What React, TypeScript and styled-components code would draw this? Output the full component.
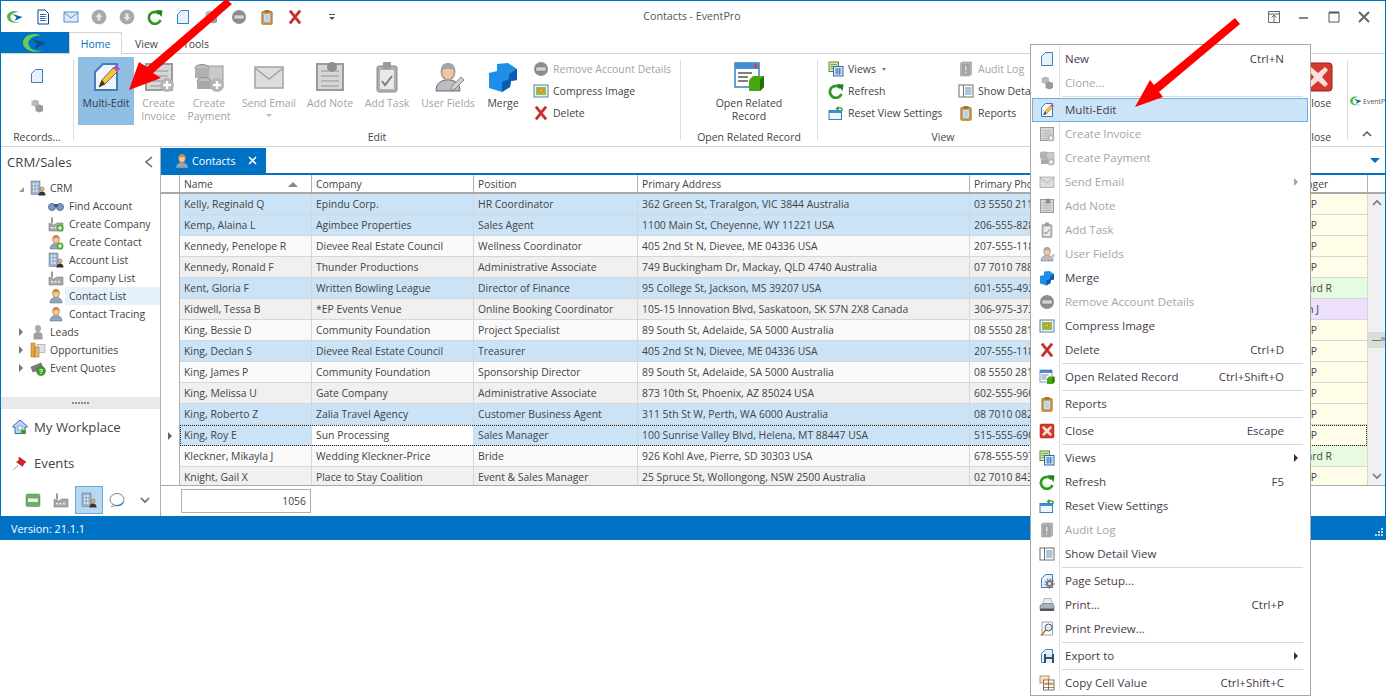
import React from "react";
import styled, { createGlobalStyle } from "styled-components";

const Global = createGlobalStyle`
  html, body { margin: 0; padding: 0; background: #fff; overflow: hidden; }
  body { font-family: "Open Sans", "Liberation Sans", sans-serif; font-size: 10.5px; color: #444; }
  * { box-sizing: border-box; }
`;

const BLUE = "#0072C6";
const GRAY = "#A3A3A3";

const Page = ({ f = "#E6F1FB", s = "#3B7DBE" }: { f?: string; s?: string }) => (
  <path d="M13 3h14v26H5V11z" fill={f} stroke={s} strokeWidth="2" />
);
const Plus = ({ c = "#B5B5B5" }: { c?: string }) => (
  <g>
    <circle cx="24" cy="24" r="7" fill={c} />
    <path d="M24 20v8M20 24h8" stroke="#fff" strokeWidth="2.4" />
  </g>
);
const Person = ({ h = "#C98A4E", b = "#8FA6BF" }: { h?: string; b?: string }) => (
  <g>
    <path d="M4 30c0-8 5-11 12-11s12 3 12 11z" fill={b} stroke="#5A6B80" />
    <ellipse cx="16" cy="11" rx="6.5" ry="8" fill="#F0C9A0" stroke={h} strokeWidth="2" />
    <path d="M9 10c0-6 3-8 7-8s7 2 7 8c-3-3-10-3-14 0z" fill={h} />
  </g>
);
const Building = () => (
  <g>
    <rect x="2" y="2" width="18" height="27" fill="#9DB2CC" stroke="#56708F" />
    <path d="M6 6h3v4H6zM12 6h3v4h-3zM6 13h3v4H6zM12 13h3v4h-3zM6 20h3v4H6zM12 20h3v4h-3z" fill="#E8EEF5" />
    <circle cx="24" cy="18" r="4" fill="#E9B77F" stroke="#7A4A1E" />
    <path d="M17 31c0-6 3-8 7-8s7 2 7 8z" fill="#333" />
  </g>
);
const Factory = () => (
  <g>
    <rect x="6" y="3" width="4" height="12" fill="#999" />
    <path d="M2 30V14l9 4 7-4 12 0v16z" fill="#A8A8A8" stroke="#6E6E6E" />
    <path d="M6 22h4v3H6zM13 22h4v3h-4zM20 22h4v3h-4z" fill="#EEE" />
  </g>
);
const Cubes = ({ a = "#9A9A9A", b = "#B9B9B9" }: { a?: string; b?: string }) => (
  <g>
    <path d="M5 6l8-3 7 3v9l-7 3-8-3z" fill={b} />
    <path d="M13 16l8-3 7 3v10l-7 3-8-3z" fill={a} />
  </g>
);
const Sheet = () => (
  <g>
    <rect x="3" y="3" width="26" height="26" fill="#D6D6D6" stroke="#9A9A9A" strokeWidth="2" />
    <path d="M7 10h18M7 15h18M7 20h18M7 25h18" stroke="#A9A9A9" strokeWidth="1.5" />
  </g>
);
const Clip = ({ f, s, c }: { f: string; s: string; c: string }) => (
  <g>
    <rect x="6" y="5" width="20" height="25" rx="2" fill={f} stroke={s} strokeWidth="2.5" />
    <rect x="11" y="2" width="10" height="6" rx="1" fill={s} />
    <rect x="10" y="10" width="12" height="16" fill="#fff" stroke={c} />
    <path d="M12 14h8M12 18h8M12 22h8" stroke={c} strokeWidth="1.5" />
  </g>
);

const icons: Record<string, React.ReactNode> = {
  logo: (
    <g>
      <path d="M24 6C11 0-1 8 0 16c1 10 15 15 28 9-11 3-20 0-21-9 0-5 8-11 17-10z" fill="#58B947" />
      <path d="M11 10l20 6-16 8 4-7z" fill="#0B63AE" />
    </g>
  ),
  logoLight: (
    <g>
      <path d="M24 6C11 0-1 8 0 16c1 10 15 15 28 9-11 3-20 0-21-9 0-5 8-11 17-10z" fill="#6CCB55" />
      <path d="M11 10l20 6-16 8 4-7z" fill="#0B4F92" />
    </g>
  ),
  doc: (
    <g>
      <path d="M6 2h14l7 7v21H6z" fill="#fff" stroke="#123E78" strokeWidth="2" />
      <path d="M10 11h13M10 15h13M10 19h13M10 23h13" stroke="#2D62B5" strokeWidth="2" strokeDasharray="10 1 2 1" />
    </g>
  ),
  mail: (
    <g>
      <rect x="2" y="6" width="28" height="20" fill="#DCEBFA" stroke="#5B8FC7" strokeWidth="2" />
      <path d="M2 7l14 11L30 7" fill="none" stroke="#5B8FC7" strokeWidth="2" />
    </g>
  ),
  up: (
    <g>
      <circle cx="16" cy="16" r="14" fill="#A9A9A9" stroke="#8A8A8A" />
      <path d="M16 8l7 8h-4v7h-6v-7H9z" fill="#E6E6E6" />
    </g>
  ),
  down: (
    <g>
      <circle cx="16" cy="16" r="14" fill="#A9A9A9" stroke="#8A8A8A" />
      <path d="M16 24l7-8h-4V9h-6v7H9z" fill="#E6E6E6" />
    </g>
  ),
  refresh: (
    <g>
      <path d="M25 10A12 12 0 1 0 27 22" fill="none" stroke="#2E9A1F" strokeWidth="5.5" />
      <path d="M18 2l13 1-2 13z" fill="#1F7F14" />
    </g>
  ),
  new: <Page />,
  clone: <Cubes />,
  remove: (
    <g>
      <circle cx="16" cy="16" r="14" fill="#8E8E8E" />
      <rect x="6" y="12" width="20" height="8" fill="#D4D4D4" stroke="#777" />
    </g>
  ),
  reports: <Clip f="#E2B255" s="#A9772A" c="#4B82C3" />,
  del: <path d="M4 5l4-3 8 10 8-10 4 3-9 11 9 11-4 3-8-10-8 10-4-3 9-11z" fill="#CE2A22" stroke="#8E1710" strokeWidth=".6" />,
  multiEdit: (
    <g>
      <Page f="#EFF6FD" s="#3F7EBB" />
      <path d="M9 26l3-7L24 6l4 4-13 13z" fill="#F4C542" stroke="#8A6A1A" />
      <path d="M9 26l3-7 3 4z" fill="#333" />
      <path d="M23 7l3-3 4 4-3 3z" fill="#B74BC6" />
    </g>
  ),
  invoice: (
    <g>
      <Sheet />
      <Plus />
    </g>
  ),
  payment: (
    <g>
      <rect x="12" y="5" width="18" height="17" fill="#C9C9C9" stroke="#9A9A9A" />
      <ellipse cx="9" cy="7" rx="7" ry="3.5" fill="#BDBDBD" stroke="#8E8E8E" />
      <rect x="2" y="7" width="14" height="10" fill="#B0B0B0" />
      <ellipse cx="11" cy="20" rx="7" ry="3.5" fill="#BDBDBD" stroke="#8E8E8E" />
      <rect x="4" y="20" width="14" height="8" fill="#A8A8A8" />
      <Plus />
    </g>
  ),
  mailGray: (
    <g>
      <rect x="2" y="6" width="28" height="21" fill="#DDD" stroke="#A2A2A2" strokeWidth="1.5" />
      <path d="M2 7l14 11L30 7" fill="none" stroke="#A2A2A2" strokeWidth="1.5" />
    </g>
  ),
  note: (
    <g>
      <Sheet />
      <circle cx="18" cy="6" r="5" fill="#8F8F8F" />
    </g>
  ),
  task: (
    <g>
      <rect x="6" y="5" width="20" height="26" rx="2" fill="#AFAFAF" stroke="#8A8A8A" />
      <rect x="12" y="1" width="8" height="7" rx="1" fill="#9A9A9A" />
      <rect x="9" y="9" width="14" height="19" fill="#E8E8E8" />
      <path d="M11 20l3 4 7-9" fill="none" stroke="#7E7E7E" strokeWidth="2" />
    </g>
  ),
  userFields: (
    <g>
      <Person h="#A4A4A4" b="#BDBDBD" />
      <path d="M18 30l2-5 9-9 3 3-9 9z" fill="#CFCFCF" stroke="#8A8A8A" />
    </g>
  ),
  merge: (
    <g>
      <path d="M10 3l11-1 9 6v11l-6 1-1 6-8 5-13-4V12l8-2z" fill="#1E8FE6" />
      <path d="M22 13l8-5v11l-6 1-1 6-8 5v-10l7-3z" fill="#0B5CAF" />
    </g>
  ),
  compress: (
    <g>
      <rect x="2" y="4" width="28" height="24" fill="#EAF1F9" stroke="#5C7FA8" strokeWidth="2" />
      <rect x="6" y="8" width="20" height="16" fill="#8FBF4D" />
      <circle cx="16" cy="15" r="5" fill="#E58A1F" />
      <circle cx="16" cy="15" r="2" fill="#F8D24B" />
    </g>
  ),
  openRelated: (
    <g>
      <rect x="2" y="2" width="24" height="24" fill="#fff" stroke="#3B7DBE" strokeWidth="1.5" />
      <rect x="2" y="2" width="24" height="6" fill="#3F8FD6" />
      <rect x="21" y="3.5" width="3" height="3" fill="#E33" />
      <path d="M5 12h14M5 16h10M5 20h10" stroke="#555" strokeWidth="1.4" />
      <path d="M16 19l4-4h11v11l-4 4H16z" fill="#46A80E" />
      <path d="M27 19l4-4v11l-4 4z" fill="#1F7005" />
    </g>
  ),
  views: (
    <g>
      <rect x="2" y="2" width="19" height="19" fill="#D2E5B8" stroke="#5E8F2A" strokeWidth="2" />
      <path d="M5 7h13M5 11h13M5 15h13" stroke="#5E8F2A" strokeWidth="1.5" />
      <rect x="11" y="11" width="19" height="19" fill="#DCE9F8" stroke="#2F6CA8" strokeWidth="2" />
      <path d="M14 16h13M14 20h13M14 24h13M18 14v14M23 14v14" stroke="#2F6CA8" strokeWidth="1.5" />
    </g>
  ),
  reset: (
    <g>
      <rect x="2" y="11" width="25" height="18" fill="#EEF5FC" stroke="#3B7DBE" strokeWidth="2" />
      <rect x="2" y="11" width="25" height="5" fill="#3F8FD6" />
      <path d="M18 8c4-4 11-3 11 3" fill="none" stroke="#2E9A1F" strokeWidth="2.5" />
      <path d="M21 2v10l-6-5z" fill="#2E9A1F" />
    </g>
  ),
  audit: (
    <g>
      <path d="M5 4l4-2h18v25l-4 3H5z" fill="#B4B4B4" stroke="#8C8C8C" />
      <rect x="8" y="6" width="15" height="21" fill="#A2A2A2" />
      <path d="M15.5 10v9" stroke="#E2E2E2" strokeWidth="3" />
      <circle cx="15.5" cy="23" r="1.7" fill="#E2E2E2" />
    </g>
  ),
  detail: (
    <g>
      <rect x="2" y="4" width="28" height="24" fill="#fff" stroke="#6E6E6E" strokeWidth="2" />
      <path d="M11 4v24" stroke="#6E6E6E" strokeWidth="2" />
      <path d="M14 10h13M14 14h13M14 18h13M14 22h13" stroke="#2F6CA8" strokeWidth="1.6" />
    </g>
  ),
  closeRed: (
    <g>
      <rect x="2" y="2" width="28" height="28" rx="3" fill="#D5392C" stroke="#9A1F14" />
      <path d="M9 6l7 6 7-6 3 3-6 7 6 7-3 3-7-6-7 6-3-3 6-7-6-7z" fill="#F8E0DC" />
    </g>
  ),
  pageSetup: (
    <g>
      <Page />
      <circle cx="21" cy="21" r="7" fill="#777" />
      <circle cx="21" cy="21" r="3" fill="#eee" />
      <circle cx="21" cy="21" r="9" fill="none" stroke="#777" strokeWidth="2.5" strokeDasharray="3 3" />
    </g>
  ),
  print: (
    <g>
      <path d="M10 3h14l3 12H7z" fill="#E6EDF5" stroke="#6F7F92" />
      <path d="M2 17l6-4h20l2 4v9H2z" fill="#A9B0B8" stroke="#555" />
      <rect x="2" y="23" width="28" height="5" fill="#555" />
    </g>
  ),
  preview: (
    <g>
      <path d="M6 2h21v26H6z" fill="#fff" stroke="#6E8FB5" strokeWidth="1.6" />
      <circle cx="19" cy="13" r="7" fill="#DCEBFA" stroke="#555" strokeWidth="2" />
      <path d="M14 18L4 29" stroke="#B5792C" strokeWidth="3.5" />
    </g>
  ),
  export: (
    <g>
      <Page f="#EAF3FB" />
      <rect x="10" y="12" width="20" height="18" fill="#2F4F72" />
      <rect x="14" y="12" width="12" height="6" fill="#DCE6F0" />
      <rect x="14" y="22" width="12" height="8" fill="#EEE" />
    </g>
  ),
  copy: (
    <g>
      <rect x="2" y="2" width="18" height="14" fill="#F8E2C8" stroke="#B5752C" strokeWidth="1.6" />
      <rect x="9" y="10" width="21" height="20" fill="#fff" stroke="#555" strokeWidth="1.6" />
      <path d="M9 15h21v5H9z" fill="#E39A4A" />
      <path d="M9 25h21M19 10v20" stroke="#555" strokeWidth="1.4" />
    </g>
  ),
  contact: <Person />,
  crm: <Building />,
  find: (
    <g>
      <circle cx="8" cy="18" r="7" fill="#7C9CC4" stroke="#3D5A80" strokeWidth="1.5" />
      <circle cx="24" cy="18" r="7" fill="#7C9CC4" stroke="#3D5A80" strokeWidth="1.5" />
      <rect x="12" y="12" width="8" height="6" fill="#3D5A80" />
    </g>
  ),
  createCompany: (
    <g>
      <Factory />
      <Plus c="#4FAF2E" />
    </g>
  ),
  createContact: (
    <g>
      <Person />
      <Plus c="#4FAF2E" />
    </g>
  ),
  company: <Factory />,
  leads: (
    <g>
      <ellipse cx="16" cy="9" rx="6" ry="7" fill="#A9A9A9" />
      <path d="M7 31V22c0-4 4-6 9-6s9 2 9 6v9z" fill="#A0A0A0" />
    </g>
  ),
  opps: (
    <g>
      <rect x="14" y="5" width="16" height="16" fill="#DDE3EA" stroke="#7A8CA0" />
      <rect x="2" y="2" width="8" height="28" fill="#E7A446" stroke="#9A651C" />
      <rect x="10" y="10" width="8" height="20" fill="#EDB55F" stroke="#9A651C" />
    </g>
  ),
  quotes: (
    <g>
      <path d="M2 14l20-8 4 10-20 8z" fill="#7E7E7E" stroke="#444" />
      <circle cx="22" cy="22" r="9" fill="#3F9F2A" stroke="#1F6A10" />
      <text x="22" y="27" textAnchor="middle" fontSize="13" fontWeight="700" fill="#fff" fontFamily="Liberation Sans, sans-serif">?</text>
    </g>
  ),
  home: (
    <g>
      <path d="M16 2L1 15l3 2 2-1v13h20V16l2 1 3-2z" fill="#BDD7F0" stroke="#2F6CA8" strokeWidth="2" />
      <rect x="12" y="14" width="8" height="8" fill="#fff" stroke="#2F6CA8" />
      <rect x="18" y="22" width="10" height="8" rx="2" fill="#3F9F2A" />
    </g>
  ),
  pin: (
    <g>
      <path d="M14 4l14 10-4 3-3 6-12-9 5-3z" fill="#D8232A" stroke="#9A1117" />
      <path d="M12 20L3 30" stroke="#999" strokeWidth="2" />
    </g>
  ),
  cal: (
    <g>
      <rect x="2" y="4" width="28" height="25" rx="3" fill="#6FAE6A" stroke="#4D8A4A" />
      <rect x="6" y="13" width="20" height="7" fill="#E8F5E6" />
    </g>
  ),
  chat: (
    <g>
      <ellipse cx="16" cy="15" rx="14" ry="12" fill="#fff" stroke="#5A5A5A" strokeWidth="1.5" />
      <path d="M28 20c-2 6-9 8-15 7" fill="none" stroke="#2F7FD0" strokeWidth="2.5" />
      <path d="M8 24l-3 6 8-3z" fill="#fff" stroke="#5A5A5A" />
    </g>
  ),
};

const IconBox = styled.svg<{ $s: number }>`
  width: ${(p) => p.$s}px;
  height: ${(p) => p.$s}px;
  flex: none;
  display: block;
`;
const Ic = ({ n, s = 16 }: { n: string; s?: number }) => (
  <IconBox $s={s} viewBox="0 0 32 32" aria-hidden="true">
    {icons[n]}
  </IconBox>
);

const Window = styled.div`
  width: 1386px;
  height: 540px;
  display: flex;
  flex-direction: column;
  border-top: 1px solid ${BLUE};
  position: relative;
`;
const Inner = styled.div`
  flex: 1;
  min-height: 0;
  display: flex;
  flex-direction: column;
  border-left: 1px solid ${BLUE};
  border-right: 1px solid ${BLUE};
`;
const TitleBar = styled.div`
  height: 31px;
  display: flex;
  align-items: center;
  position: relative;
  padding-left: 6px;
`;
const Qat = styled.div`
  display: flex;
  align-items: center;
  gap: 12px;
  padding-right: 8px;
`;
const QatMore = styled.span`
  margin-left: 14px;
  width: 6px;
  height: 6px;
  border-top: 1px solid #555;
  position: relative;
  &::after {
    content: "";
    position: absolute;
    left: 0;
    top: 2px;
    border-left: 3px solid transparent;
    border-right: 3px solid transparent;
    border-top: 3px solid #555;
  }
`;
const Title = styled.div`
  position: absolute;
  left: 0;
  right: 0;
  top: 8px;
  text-align: center;
  font-size: 10.7px;
  color: #555;
  padding-right: 2px;
`;
const WinButtons = styled.div`
  margin-left: auto;
  display: flex;
  align-items: center;
  gap: 14px;
  padding-right: 13px;
`;
const WinBtn = styled.svg`
  width: 16px;
  height: 16px;
  display: block;
`;
const TabsRow = styled.div`
  height: 21px;
  display: flex;
  align-items: stretch;
  margin-left: -1px;
`;
const FileTab = styled.div`
  width: 69px;
  background: ${BLUE};
  display: flex;
  align-items: center;
  justify-content: center;
`;
const RibbonTab = styled.div<{ $active?: boolean; $w: number }>`
  width: ${(p) => p.$w}px;
  display: flex;
  align-items: center;
  justify-content: center;
  padding-top: 1px;
  font-size: 10.5px;
  color: ${(p) => (p.$active ? BLUE : "#444")};
  background: #fff;
  border: 1px solid ${(p) => (p.$active ? "#D4D4D4" : "transparent")};
  border-bottom: none;
  position: relative;
  margin-bottom: ${(p) => (p.$active ? "-1px" : "0")};
  z-index: 1;
`;
const Ribbon = styled.div`
  height: 94px;
  display: flex;
  border-top: 1px solid #d4d4d4;
  border-bottom: 1px solid #d4d4d4;
`;
const Group = styled.div<{ $w?: number; $grow?: boolean }>`
  width: ${(p) => (p.$w ? p.$w + "px" : "auto")};
  flex: ${(p) => (p.$grow ? "1" : "none")};
  display: flex;
  flex-direction: column;
`;
const GroupBody = styled.div<{ $pad?: number; $center?: boolean }>`
  flex: 1;
  display: flex;
  padding: 3px 0 0 ${(p) => p.$pad ?? 0}px;
  justify-content: ${(p) => (p.$center ? "center" : "flex-start")};
  min-height: 0;
`;
const GroupLabel = styled.div`
  height: 14px;
  margin-bottom: 2px;
  line-height: 14px;
  text-align: center;
  font-size: 10.5px;
  color: #444;
  white-space: nowrap;
`;
const GroupSep = styled.div`
  width: 1px;
  flex: none;
  margin: 6px 0 6px;
  background: #dcdcdc;
`;
const RecordsCol = styled.div`
  width: 100%;
  display: flex;
  flex-direction: column;
  align-items: center;
  padding-top: 11px;
  gap: 14px;
`;
const LargeBtn = styled.div<{ $w: number; $on?: boolean; $off?: boolean }>`
  width: ${(p) => p.$w}px;
  height: 68px;
  flex: none;
  display: flex;
  flex-direction: column;
  align-items: center;
  padding-top: 4px;
  background: ${(p) => (p.$on ? "#90BEE2" : "transparent")};
  color: ${(p) => (p.$on ? "#2B3D52" : p.$off ? GRAY : "#444")};
`;
const LargeLabel = styled.div`
  margin-top: 4px;
  line-height: 13px;
  text-align: center;
  white-space: pre-line;
  font-size: 10.5px;
`;
const Caret = styled.span`
  display: block;
  margin: 4px auto 0;
  width: 0;
  height: 0;
  border-left: 3px solid transparent;
  border-right: 3px solid transparent;
  border-top: 3px solid #bbb;
`;
const SmallCol = styled.div<{ $w?: number; $ml?: number }>`
  width: ${(p) => (p.$w ? p.$w + "px" : "auto")};
  margin-left: ${(p) => p.$ml ?? 0}px;
  flex: none;
  display: flex;
  flex-direction: column;
  padding-top: 1px;
`;
const SmallBtn = styled.div<{ $off?: boolean }>`
  height: 22px;
  display: flex;
  align-items: center;
  gap: 4px;
  white-space: nowrap;
  font-size: 10.5px;
  color: ${(p) => (p.$off ? GRAY : "#444")};
`;
const SmallCaret = styled.span`
  width: 0;
  height: 0;
  margin-left: 2px;
  border-left: 2.5px solid transparent;
  border-right: 2.5px solid transparent;
  border-top: 3px solid #777;
`;
const LogoBox = styled.div`
  height: 74px;
  display: flex;
  align-items: center;
  padding: 20px 0 0 2px;
  gap: 1px;
  overflow: hidden;
  font-size: 7px;
  color: #555;
  white-space: nowrap;
`;
const Chevron = styled.svg`
  display: block;
  margin: 0 auto;
  width: 10px;
  height: 14px;
`;
const Body = styled.div`
  flex: 1;
  min-height: 0;
  display: flex;
`;
const Side = styled.div`
  width: 160px;
  flex: none;
  display: flex;
  flex-direction: column;
  border-right: 1px solid #b0b0b0;
`;
const SideHead = styled.div`
  height: 32px;
  display: flex;
  align-items: center;
  justify-content: space-between;
  padding: 0 6px 3px 6px;
  font-size: 13.2px;
  color: #444;
`;
const Tree = styled.div`
  flex: 1;
`;
const TreeRow = styled.div<{ $lvl?: number; $sel?: boolean }>`
  height: 18px;
  display: flex;
  align-items: center;
  padding-left: ${(p) => (p.$lvl ? 47 : 14)}px;
  gap: ${(p) => (p.$lvl ? 5 : 4)}px;
  color: #444;
  font-size: 10.5px;
  white-space: nowrap;
  position: relative;
  &::before {
    content: "";
    position: absolute;
    left: 64px;
    right: 0;
    top: 0;
    bottom: 0;
    background: ${(p) => (p.$sel ? "#E5F1FB" : "transparent")};
    z-index: 0;
  }
  & > * {
    position: relative;
    z-index: 1;
  }
`;
const Expander = styled.span<{ $open?: boolean }>`
  width: 12px;
  margin-right: -1px;
  flex: none;
  display: flex;
  justify-content: center;
  &::before {
    content: "";
    width: 0;
    height: 0;
    ${(p) =>
      p.$open
        ? "border-left: 5px solid transparent; border-bottom: 5px solid #999; margin-top: 2px;"
        : "border-top: 4px solid transparent; border-bottom: 4px solid transparent; border-left: 4px solid #777;"}
  }
`;
const Grip = styled.div`
  height: 12px;
  background: #e9e9e9;
  display: flex;
  align-items: center;
  justify-content: center;
  gap: 1px;
`;
const GripDot = styled.span`
  width: 2px;
  height: 2px;
  background: #8a8a8a;
`;
const NavItem = styled.div`
  height: 36px;
  display: flex;
  align-items: center;
  padding-left: 11px;
  gap: 6px;
  font-size: 13.2px;
  color: #444;
`;
const NavIcons = styled.div`
  height: 35px;
  display: flex;
  align-items: flex-start;
  padding: 5px 0 0 18px;
`;
const NavIcon = styled.div<{ $sel?: boolean }>`
  width: 28px;
  height: 28px;
  display: flex;
  align-items: center;
  justify-content: center;
  background: ${(p) => (p.$sel ? "#B6D8F2" : "transparent")};
  border: 1px solid ${(p) => (p.$sel ? "#6EA9DD" : "transparent")};
`;
const Main = styled.div`
  flex: 1;
  min-width: 0;
  display: flex;
  flex-direction: column;
`;
const DocStrip = styled.div`
  height: 28px;
  flex: none;
  display: flex;
  align-items: flex-end;
  justify-content: space-between;
  border-bottom: 2px solid ${BLUE};
`;
const DocTab = styled.div`
  width: 105px;
  height: 25px;
  background: ${BLUE};
  color: #fff;
  display: flex;
  align-items: center;
  padding-left: 13px;
  gap: 2px;
  font-size: 10.7px;
`;
const DocClose = styled.svg`
  width: 9px;
  height: 9px;
  margin-left: auto;
  margin-right: 9px;
`;
const DocMenu = styled.span`
  width: 0;
  height: 0;
  margin: 0 5px 10px 0;
  border-left: 5px solid transparent;
  border-right: 5px solid transparent;
  border-top: 5px solid ${BLUE};
`;
const GridRow = styled.div`
  display: grid;
  grid-template-columns: 19px 132px 162px 164px 332px 270px 128px 17px;
`;
const HeadRow = styled(GridRow)`
  height: 19px;
  flex: none;
  border-bottom: 2px solid #a8a8a8;
`;
const HeadCell = styled.div<{ $plain?: boolean }>`
  border-right: 1px solid ${(p) => (p.$plain ? "transparent" : "#b0b0b0")};
  padding: 1px 4px 0;
  line-height: 16px;
  font-size: 10.3px;
  color: #444;
  overflow: hidden;
  white-space: nowrap;
  display: flex;
  align-items: center;
  justify-content: space-between;
`;
const IndicatorHead = styled(HeadCell)`
  padding: 0;
`;
const SortUp = styled.span`
  width: 0;
  height: 0;
  margin-right: 9px;
  border-left: 5px solid transparent;
  border-right: 5px solid transparent;
  border-bottom: 5px solid #888;
`;
const GridBody = styled.div`
  flex: 1;
  min-height: 0;
  position: relative;
  overflow: hidden;
  border-bottom: 1px solid #a8a8a8;
`;
const DataRow = styled(GridRow)`
  height: 21px;
  position: relative;
`;
const Cell = styled.div<{ $bg: string }>`
  background: ${(p) => p.$bg};
  border-right: 1px solid #d6d6d6;
  border-bottom: 1px solid #d6d6d6;
  padding: 0 4px;
  line-height: 20px;
  font-size: 10.4px;
  color: #444;
  overflow: hidden;
  white-space: nowrap;
`;
const ManagerCell = styled(Cell)<{ $end: number }>`
  text-align: right;
  padding-right: ${(p) => p.$end}px;
`;
const Indicator = styled.div`
  background: #fff;
  border-right: 1px solid #b0b0b0;
  display: flex;
  align-items: center;
  justify-content: center;
  &::before {
    content: "";
    width: 0;
    height: 0;
    border-top: 4px solid transparent;
    border-bottom: 4px solid transparent;
    border-left: 4px solid #666;
  }
`;
const BlankIndicator = styled.div`
  background: #fff;
  border-right: 1px solid #b0b0b0;
`;
const FocusBox = styled.div`
  position: absolute;
  left: 19px;
  width: 1187px;
  top: 0;
  height: 21px;
  border: 1px dotted #222;
  pointer-events: none;
`;
const ScrollTrack = styled.div`
  position: absolute;
  right: 0;
  top: 0;
  bottom: 0;
  width: 17px;
  background: #f0f0f0;
  display: flex;
  flex-direction: column;
  align-items: center;
  justify-content: space-between;
  padding: 5px 0;
  color: #777;
`;
const ScrollThumb = styled.div`
  position: absolute;
  top: 138px;
  left: 0;
  right: -1px;
  height: 16px;
  background: #dcdcdc;
  display: flex;
  align-items: center;
  padding-left: 4px;
`;
const ThumbMark = styled.span`
  width: 9px;
  height: 1px;
  background: #3f9f2a;
`;
const ThumbNub = styled.span`
  width: 4px;
  height: 4px;
  margin-bottom: 3px;
  background: #a8a8a8;
`;
const ScrollChev = styled.svg`
  width: 10px;
  height: 8px;
  display: block;
`;
const Footer = styled.div`
  height: 30px;
  flex: none;
  padding: 3px 0 0 20px;
`;
const SumBox = styled.div`
  width: 130px;
  height: 24px;
  border: 1px solid #b0b0b0;
  text-align: right;
  padding-right: 4px;
  line-height: 22px;
  font-size: 10.4px;
  color: #444;
`;
const Status = styled.div`
  height: 24px;
  flex: none;
  margin: 0 -1px;
  background: ${BLUE};
  color: #fff;
  font-size: 10.8px;
  display: flex;
  align-items: center;
  justify-content: space-between;
  padding: 0 3px 0 12px;
`;
const Resize = styled.svg`
  width: 10px;
  height: 10px;
  align-self: flex-end;
  margin-bottom: 3px;
`;
const Menu = styled.div`
  position: absolute;
  left: 1030px;
  top: 44px;
  width: 281px;
  height: 652px;
  background: #fff;
  border: 2px solid #a6a6a6;
  border-width: 1px 1.5px 1.5px 1px;
  padding: 2px 1px 0;
  z-index: 5;
  display: flex;
  flex-direction: column;
`;
const MenuItem = styled.div<{ $off?: boolean; $hot?: boolean }>`
  height: 24px;
  flex: none;
  display: flex;
  align-items: center;
  position: relative;
  font-size: 11.5px;
  color: ${(p) => (p.$off ? "#A5A5A5" : "#4A3A4E")};
  background: ${(p) => (p.$hot ? "#CCE4F7" : "transparent")};
  border: 1px solid ${(p) => (p.$hot ? "#6FB0E4" : "transparent")};
  margin-right: 1px;
`;
const MenuGutter = styled.div`
  width: 27px;
  height: 24px;
  flex: none;
  display: flex;
  align-items: center;
  justify-content: center;
  margin-left: -1px;
  padding-left: 2px;
`;
const MenuLabel = styled.span`
  margin: 0 0 2px 6px;
  flex: 1;
  white-space: nowrap;
`;
const MenuKey = styled.span`
  margin: 0 23px 2px 0;
  white-space: nowrap;
`;
const MenuArrow = styled.span<{ $off?: boolean }>`
  position: absolute;
  right: 9px;
  width: 0;
  height: 0;
  border-top: 4px solid transparent;
  border-bottom: 4px solid transparent;
  border-left: 4px solid ${(p) => (p.$off ? "#A5A5A5" : "#333")};
`;
const MenuSep = styled.div`
  height: 3px;
  flex: none;
  margin-left: 30px;
  margin-right: 6px;
  display: flex;
  align-items: center;
  &::before {
    content: "";
    flex: 1;
    height: 1px;
    background: #d8d8d8;
  }
`;
const GutterLine = styled.div`
  position: absolute;
  left: 28px;
  top: 0;
  bottom: 4px;
  width: 1px;
  background: #e2e2e2;
`;
const Arrows = styled.svg`
  position: absolute;
  left: 0;
  top: 0;
  width: 1386px;
  height: 697px;
  z-index: 9;
  pointer-events: none;
`;

const Y = "#FFFCE8";
const G = "#E6FBDF";
const V = "#EDE0FD";
type R = [string, string, string, string, string, string, string, number, boolean];
const rows: R[] = [
  ["Kelly, Reginald Q", "Epindu Corp.", "HR Coordinator", "362 Green St, Traralgon, VIC 3844 Australia", "03 5550 2110", "Lewis, Anne P", Y, 50, true],
  ["Kemp, Alaina L", "Agimbee Properties", "Sales Agent", "1100 Main St, Cheyenne, WY 11221 USA", "206-555-8280", "Lewis, Anne P", Y, 50, true],
  ["Kennedy, Penelope R", "Dievee Real Estate Council", "Wellness Coordinator", "405 2nd St N, Dievee, ME 04336 USA", "207-555-1180", "Lewis, Anne P", Y, 50, false],
  ["Kennedy, Ronald F", "Thunder Productions", "Administrative Associate", "749 Buckingham Dr, Mackay, QLD 4740 Australia", "07 7010 7880", "Lewis, Anne P", Y, 50, false],
  ["Kent, Gloria F", "Written Bowling League", "Director of Finance", "95 College St, Jackson, MS 39207 USA", "601-555-4920", "Bell, Howard R", G, 35, true],
  ["Kidwell, Tessa B", "*EP Events Venue", "Online Booking Coordinator", "105-15 Innovation Blvd, Saskatoon, SK S7N 2X8 Canada", "306-975-3730", "Dean, Joan J", V, 48, false],
  ["King, Bessie D", "Community Foundation", "Project Specialist", "89 South St, Adelaide, SA 5000 Australia", "08 5550 2810", "Lewis, Anne P", Y, 50, false],
  ["King, Declan S", "Dievee Real Estate Council", "Treasurer", "405 2nd St N, Dievee, ME 04336 USA", "207-555-1180", "Lewis, Anne P", Y, 50, true],
  ["King, James P", "Community Foundation", "Sponsorship Director", "89 South St, Adelaide, SA 5000 Australia", "08 5550 2810", "Lewis, Anne P", Y, 50, false],
  ["King, Melissa U", "Gate Company", "Administrative Associate", "873 10th St, Phoenix, AZ 85024 USA", "602-555-9600", "Lewis, Anne P", Y, 50, false],
  ["King, Roberto Z", "Zalia Travel Agency", "Customer Business Agent", "311 5th St W, Perth, WA 6000 Australia", "08 7010 0820", "Lewis, Anne P", Y, 50, true],
  ["King, Roy E", "Sun Processing", "Sales Manager", "100 Sunrise Valley Blvd, Helena, MT 88447 USA", "515-555-6900", "Lewis, Anne P", Y, 50, true],
  ["Kleckner, Mikayla J", "Wedding Kleckner-Price", "Bride", "926 Kohl Ave, Pierre, SD 30303 USA", "678-555-5970", "Bell, Howard R", G, 35, false],
  ["Knight, Gail X", "Place to Stay Coalition", "Event & Sales Manager", "25 Spruce St, Wollongong, NSW 2500 Australia", "02 7010 8430", "Lewis, Anne P", Y, 50, false],
];

type M = { t?: string; i?: string; k?: string; off?: boolean; hot?: boolean; sub?: boolean; sep?: boolean };
const menu: M[] = [
  { t: "New", i: "new", k: "Ctrl+N" },
  { t: "Clone...", i: "clone", off: true },
  { sep: true },
  { t: "Multi-Edit", i: "multiEdit", hot: true },
  { t: "Create Invoice", i: "invoice", off: true },
  { t: "Create Payment", i: "payment", off: true },
  { t: "Send Email", i: "mailGray", off: true, sub: true },
  { t: "Add Note", i: "note", off: true },
  { t: "Add Task", i: "task", off: true },
  { t: "User Fields", i: "userFields", off: true },
  { t: "Merge", i: "merge" },
  { t: "Remove Account Details", i: "remove", off: true },
  { t: "Compress Image", i: "compress" },
  { t: "Delete", i: "del", k: "Ctrl+D" },
  { sep: true },
  { t: "Open Related Record", i: "openRelated", k: "Ctrl+Shift+O" },
  { sep: true },
  { t: "Reports", i: "reports" },
  { sep: true },
  { t: "Close", i: "closeRed", k: "Escape" },
  { sep: true },
  { t: "Views", i: "views", sub: true },
  { t: "Refresh", i: "refresh", k: "F5" },
  { t: "Reset View Settings", i: "reset" },
  { t: "Audit Log", i: "audit", off: true },
  { t: "Show Detail View", i: "detail" },
  { sep: true },
  { t: "Page Setup...", i: "pageSetup" },
  { t: "Print...", i: "print", k: "Ctrl+P" },
  { t: "Print Preview...", i: "preview" },
  { sep: true },
  { t: "Export to", i: "export", sub: true },
  { sep: true },
  { t: "Copy Cell Value", i: "copy", k: "Ctrl+Shift+C" },
];

const large: { t: string; i: string; w: number; on?: boolean; off?: boolean; caret?: boolean }[] = [
  { t: "Multi-Edit", i: "multiEdit", w: 56, on: true },
  { t: "Create\nInvoice", i: "invoice", w: 49, off: true },
  { t: "Create\nPayment", i: "payment", w: 52, off: true },
  { t: "Send Email", i: "mailGray", w: 68, off: true, caret: true },
  { t: "Add Note", i: "note", w: 54, off: true },
  { t: "Add Task", i: "task", w: 60, off: true },
  { t: "User Fields", i: "userFields", w: 62, off: true },
  { t: "Merge", i: "merge", w: 48 },
];

const qat = ["doc", "mail", "up", "down", "refresh", "new", "clone", "remove", "reports", "del"];
const tree = [
  { t: "Find Account", i: "find" },
  { t: "Create Company", i: "createCompany" },
  { t: "Create Contact", i: "createContact" },
  { t: "Account List", i: "crm" },
  { t: "Company List", i: "company" },
  { t: "Contact List", i: "contact", sel: true },
  { t: "Contact Tracing", i: "contact" },
];

export default function App() {
  return (
    <>
      <Global />
      <Window>
        <Inner>
          <TitleBar>
            <Qat>
              <Ic n="logo" />
              {qat.map((q) => (
                <Ic key={q} n={q} />
              ))}
              <QatMore />
            </Qat>
            <Title>Contacts - EventPro</Title>
            <WinButtons>
              <WinBtn viewBox="0 0 16 16">
                <path d="M2.5 2.5h11v11h-11zM2.5 5h11M8 13V6M5.5 8.5L8 6l2.5 2.5" fill="none" stroke="#666" />
              </WinBtn>
              <WinBtn viewBox="0 0 16 16">
                <path d="M3 9h9" stroke="#666" strokeWidth="1.6" />
              </WinBtn>
              <WinBtn viewBox="0 0 16 16">
                <path d="M3 3.5h10v9.5H3z" fill="none" stroke="#555" />
                <path d="M3 3.5h10" stroke="#555" strokeWidth="2" />
              </WinBtn>
              <WinBtn viewBox="0 0 16 16">
                <path d="M3 3l10 10M13 3L3 13" stroke="#666" strokeWidth="2" />
              </WinBtn>
            </WinButtons>
          </TitleBar>
          <TabsRow>
            <FileTab>
              <Ic n="logoLight" s={24} />
            </FileTab>
            <RibbonTab $active $w={53}>Home</RibbonTab>
            <RibbonTab $w={49}>View</RibbonTab>
            <RibbonTab $w={50}>Tools</RibbonTab>
          </TabsRow>
          <Ribbon>
            <Group $w={72}>
              <GroupBody>
                <RecordsCol>
                  <Ic n="new" />
                  <Ic n="clone" />
                </RecordsCol>
              </GroupBody>
              <GroupLabel>Records...</GroupLabel>
            </Group>
            <GroupSep />
            <Group $w={606}>
              <GroupBody $pad={4}>
                {large.map((b) => (
                  <LargeBtn key={b.i} $w={b.w} $on={b.on} $off={b.off}>
                    <Ic n={b.i} s={32} />
                    <LargeLabel>{b.t}</LargeLabel>
                    {b.caret && <Caret />}
                  </LargeBtn>
                ))}
                <SmallCol $ml={6}>
                  <SmallBtn $off>
                    <Ic n="remove" />
                    Remove Account Details
                  </SmallBtn>
                  <SmallBtn>
                    <Ic n="compress" />
                    Compress Image
                  </SmallBtn>
                  <SmallBtn>
                    <Ic n="del" />
                    Delete
                  </SmallBtn>
                </SmallCol>
              </GroupBody>
              <GroupLabel>Edit</GroupLabel>
            </Group>
            <GroupSep />
            <Group $w={136}>
              <GroupBody $center>
                <LargeBtn $w={100}>
                  <Ic n="openRelated" s={32} />
                  <LargeLabel>{"Open Related\nRecord"}</LargeLabel>
                </LargeBtn>
              </GroupBody>
              <GroupLabel>Open Related Record</GroupLabel>
            </Group>
            <GroupSep />
            <Group $w={250}>
              <GroupBody $pad={10}>
                <SmallCol $w={130}>
                  <SmallBtn>
                    <Ic n="views" />
                    Views
                    <SmallCaret />
                  </SmallBtn>
                  <SmallBtn>
                    <Ic n="refresh" />
                    Refresh
                  </SmallBtn>
                  <SmallBtn>
                    <Ic n="reset" />
                    Reset View Settings
                  </SmallBtn>
                </SmallCol>
                <SmallCol>
                  <SmallBtn $off>
                    <Ic n="audit" />
                    Audit Log
                  </SmallBtn>
                  <SmallBtn>
                    <Ic n="detail" />
                    Show Detail View
                  </SmallBtn>
                  <SmallBtn>
                    <Ic n="reports" />
                    Reports
                  </SmallBtn>
                </SmallCol>
              </GroupBody>
              <GroupLabel>View</GroupLabel>
            </Group>
            <Group $grow />
            <Group $w={58}>
              <GroupBody $center>
                <LargeBtn $w={56}>
                  <Ic n="closeRed" s={32} />
                  <LargeLabel>Close</LargeLabel>
                </LargeBtn>
              </GroupBody>
              <GroupLabel>Close</GroupLabel>
            </Group>
            <GroupSep />
            <Group $w={37}>
              <LogoBox>
                <Ic n="logo" s={12} />
                EventPro
              </LogoBox>
              <Chevron viewBox="0 0 10 14">
                <path d="M1 8l4-4 4 4" fill="none" stroke="#555" strokeWidth="1.5" />
              </Chevron>
            </Group>
          </Ribbon>
          <Body>
            <Side>
              <SideHead>
                CRM/Sales
                <svg width="10" height="12" viewBox="0 0 10 12">
                  <path d="M8 1L2 6l6 5" fill="none" stroke="#666" strokeWidth="1.6" />
                </svg>
              </SideHead>
              <Tree>
                <TreeRow>
                  <Expander $open />
                  <Ic n="crm" />
                  CRM
                </TreeRow>
                {tree.map((c) => (
                  <TreeRow key={c.t} $lvl={1} $sel={c.sel}>
                    <Ic n={c.i} />
                    <span>{c.t}</span>
                  </TreeRow>
                ))}
                <TreeRow>
                  <Expander />
                  <Ic n="leads" />
                  Leads
                </TreeRow>
                <TreeRow>
                  <Expander />
                  <Ic n="opps" />
                  Opportunities
                </TreeRow>
                <TreeRow>
                  <Expander />
                  <Ic n="quotes" />
                  Event Quotes
                </TreeRow>
              </Tree>
              <Grip>
                {[0, 1, 2, 3, 4, 5].map((d) => (
                  <GripDot key={d} />
                ))}
              </Grip>
              <NavItem>
                <Ic n="home" />
                My Workplace
              </NavItem>
              <NavItem>
                <Ic n="pin" />
                Events
              </NavItem>
              <NavIcons>
                <NavIcon><Ic n="cal" /></NavIcon>
                <NavIcon><Ic n="company" /></NavIcon>
                <NavIcon $sel><Ic n="crm" /></NavIcon>
                <NavIcon><Ic n="chat" /></NavIcon>
                <NavIcon>
                  <svg width="10" height="8" viewBox="0 0 10 8">
                    <path d="M1 2l4 4 4-4" fill="none" stroke="#666" strokeWidth="1.6" />
                  </svg>
                </NavIcon>
              </NavIcons>
            </Side>
            <Main>
              <DocStrip>
                <DocTab>
                  <Ic n="contact" />
                  <span>Contacts</span>
                  <DocClose viewBox="0 0 9 9">
                    <path d="M1 1l7 7M8 1L1 8" stroke="#fff" strokeWidth="1.6" />
                  </DocClose>
                </DocTab>
                <DocMenu />
              </DocStrip>
              <HeadRow>
                <IndicatorHead />
                <HeadCell>
                  Name
                  <SortUp />
                </HeadCell>
                <HeadCell>Company</HeadCell>
                <HeadCell>Position</HeadCell>
                <HeadCell>Primary Address</HeadCell>
                <HeadCell>Primary Phone</HeadCell>
                <HeadCell>Account Manager</HeadCell>
                <HeadCell $plain />
              </HeadRow>
              <GridBody>
                {rows.map((r, i) => {
                  const bg = r[8] ? "#CBE3F6" : i % 2 === 0 ? "#FAFAFA" : "#F0F0F0";
                  const focus = i === 11;
                  return (
                    <DataRow key={r[0]}>
                      {focus ? <Indicator /> : <BlankIndicator />}
                      <Cell $bg={bg}>{r[0]}</Cell>
                      <Cell $bg={focus ? "#FFFFFF" : bg}>{r[1]}</Cell>
                      <Cell $bg={bg}>{r[2]}</Cell>
                      <Cell $bg={bg}>{r[3]}</Cell>
                      <Cell $bg={bg}>{r[4]}</Cell>
                      <ManagerCell $bg={r[6]} $end={r[7]}>{r[5]}</ManagerCell>
                      {focus && <FocusBox />}
                    </DataRow>
                  );
                })}
                <ScrollTrack>
                  <ScrollChev viewBox="0 0 10 8">
                    <path d="M1 6l4-4 4 4" fill="none" stroke="#777" strokeWidth="1.6" />
                  </ScrollChev>
                  <ScrollThumb>
                    <ThumbMark />
                    <ThumbNub />
                  </ScrollThumb>
                  <ScrollChev viewBox="0 0 10 8">
                    <path d="M1 2l4 4 4-4" fill="none" stroke="#777" strokeWidth="1.6" />
                  </ScrollChev>
                </ScrollTrack>
              </GridBody>
              <Footer>
                <SumBox>1056</SumBox>
              </Footer>
            </Main>
          </Body>
        </Inner>
        <Status>
          Version: 21.1.1
          <Resize viewBox="0 0 10 10">
            <path d="M7 1h2v2H7zM4 4h2v2H4zM7 4h2v2H7zM1 7h2v2H1zM4 7h2v2H4zM7 7h2v2H7z" fill="#BFD9EE" />
          </Resize>
        </Status>
      </Window>
      <Menu>
        <GutterLine />
        {menu.map((m, i) =>
          m.sep ? (
            <MenuSep key={i} />
          ) : (
            <MenuItem key={m.t} $off={m.off} $hot={m.hot}>
              <MenuGutter>
                <Ic n={m.i!} s={16} />
              </MenuGutter>
              <MenuLabel>{m.t}</MenuLabel>
              {m.k && <MenuKey>{m.k}</MenuKey>}
              {m.sub && <MenuArrow $off={m.off} />}
            </MenuItem>
          )
        )}
      </Menu>
      <Arrows viewBox="0 0 1386 697" aria-hidden="true">
        <path d="M129 90L161 78L153 73L232 4L226 -1L147 67L139 62z" fill="#FF0000" />
        <path d="M1135 107L1163 97L1159 92L1240 24L1235 18L1154 85L1150 80z" fill="#FF0000" />
      </Arrows>
    </>
  );
}
